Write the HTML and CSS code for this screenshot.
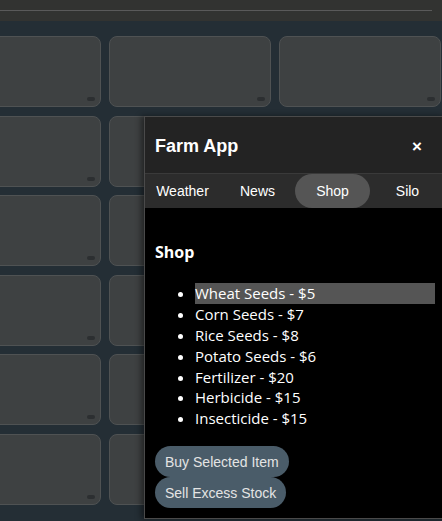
FILE: index.html
```html
<!DOCTYPE html>
<html lang="en">
<head>
    <meta charset="UTF-8">
    <meta name="viewport" content="width=device-width, initial-scale=1.0">
    <title>Farm App</title>
    <link rel="stylesheet" href="styles.css">
</head>
<body>
    <header class="topbar">
        <div class="track"></div>
    </header>

    <main class="field">
        <div class="plot"><span class="tag"></span></div>
        <div class="plot"><span class="tag"></span></div>
        <div class="plot"><span class="tag"></span></div>
        <div class="plot"><span class="tag"></span></div>
        <div class="plot"><span class="tag"></span></div>
        <div class="plot"><span class="tag"></span></div>
        <div class="plot"><span class="tag"></span></div>
        <div class="plot"><span class="tag"></span></div>
        <div class="plot"><span class="tag"></span></div>
        <div class="plot"><span class="tag"></span></div>
        <div class="plot"><span class="tag"></span></div>
        <div class="plot"><span class="tag"></span></div>
        <div class="plot"><span class="tag"></span></div>
        <div class="plot"><span class="tag"></span></div>
        <div class="plot"><span class="tag"></span></div>
        <div class="plot"><span class="tag"></span></div>
        <div class="plot"><span class="tag"></span></div>
        <div class="plot"><span class="tag"></span></div>
        <div class="plot"><span class="tag"></span></div>
        <div class="plot"><span class="tag"></span></div>
        <div class="plot"><span class="tag"></span></div>
        <div class="plot"><span class="tag"></span></div>
        <div class="plot"><span class="tag"></span></div>
        <div class="plot"><span class="tag"></span></div>
    </main>

    <aside class="panel">
        <div class="panel-head">
            <h2>Farm App</h2>
            <span class="close">&times;</span>
        </div>
        <nav class="tabs">
            <a href="#weather">Weather</a>
            <a href="#news">News</a>
            <a href="#shop" class="active">Shop</a>
            <a href="#silo">Silo</a>
        </nav>
        <section class="panel-body" id="shop">
            <h3>Shop</h3>
            <ul class="items">
                <li class="selected">Wheat Seeds - $5</li>
                <li>Corn Seeds - $7</li>
                <li>Rice Seeds - $8</li>
                <li>Potato Seeds - $6</li>
                <li>Fertilizer - $20</li>
                <li>Herbicide - $15</li>
                <li>Insecticide - $15</li>
            </ul>
            <div class="actions">
                <button>Buy Selected Item</button>
                <button>Sell Excess Stock</button>
            </div>
        </section>
    </aside>
</body>
</html>
```

FILE: styles.css
```css
body {
    margin: 0;
    padding: 0;
    background-color: #242e35;
    font-family: "Liberation Sans", Arial, sans-serif;
    overflow: hidden;
    height: 521px;
    position: relative;
}
.topbar {
    height: 21px;
    background-color: #323331;
    padding: 10px 10px 0 0;
    box-sizing: border-box;
}
.track {
    height: 1px;
    background-color: #5a5a5a;
}
.field {
    display: grid;
    grid-template-columns: repeat(4, 161.5px);
    grid-auto-rows: 71px;
    gap: 8.5px;
    margin-left: -61px;
    padding-top: 15px;
}
.plot {
    position: relative;
    background-color: #3e4142;
    border: 1px solid #4f5253;
    border-radius: 8px;
}
.tag {
    position: absolute;
    right: 5px;
    bottom: 5px;
    width: 8px;
    height: 4px;
    border-radius: 2px;
    background-color: #2c2f31;
}
.panel {
    position: absolute;
    left: 144px;
    top: 116px;
    bottom: 2px;
    width: 300px;
    display: flex;
    flex-direction: column;
    border: 1px solid #4a4a4a;
    background-color: #000;
    box-shadow: -3px 0 6px rgba(0, 0, 0, 0.45);
}
.panel-head {
    display: flex;
    align-items: center;
    justify-content: space-between;
    height: 57px;
    padding: 4px 10px 0;
    box-sizing: border-box;
    background-color: #232323;
    border-bottom: 1px solid #3a3a3a;
    color: #fff;
}
.panel-head h2 {
    margin: 0;
    font-size: 18px;
    font-weight: bold;
}
.close {
    font-size: 17px;
    font-weight: bold;
    margin-right: 13px;
}
.tabs {
    display: flex;
    height: 35px;
    background-color: #2c2c2c;
}
.tabs a {
    width: 75px;
    flex: none;
    display: flex;
    align-items: center;
    justify-content: center;
    color: #fff;
    font-size: 14px;
    text-decoration: none;
    border-radius: 18px;
}
.tabs a.active {
    background-color: #555;
}
.panel-body {
    flex: 1;
    padding: 10px;
    background-color: #000;
    color: #fff;
    font-family: "Open Sans", sans-serif;
}
.panel-body h3 {
    margin: 24px 0 20px;
    font-size: 16px;
    line-height: 21px;
}
.items {
    margin: 0;
    padding-left: 40px;
    font-size: 15px;
    line-height: 20.8px;
}
.items .selected {
    background-color: #555;
}
.actions {
    display: flex;
    flex-direction: column;
    align-items: flex-start;
    margin-top: 17px;
}
.actions button {
    height: 31px;
    padding: 0 10px;
    border: none;
    border-radius: 16px;
    background-color: #4a5c69;
    color: #e4e4e4;
    font-family: "Liberation Sans", Arial, sans-serif;
    font-size: 14px;
}
```
